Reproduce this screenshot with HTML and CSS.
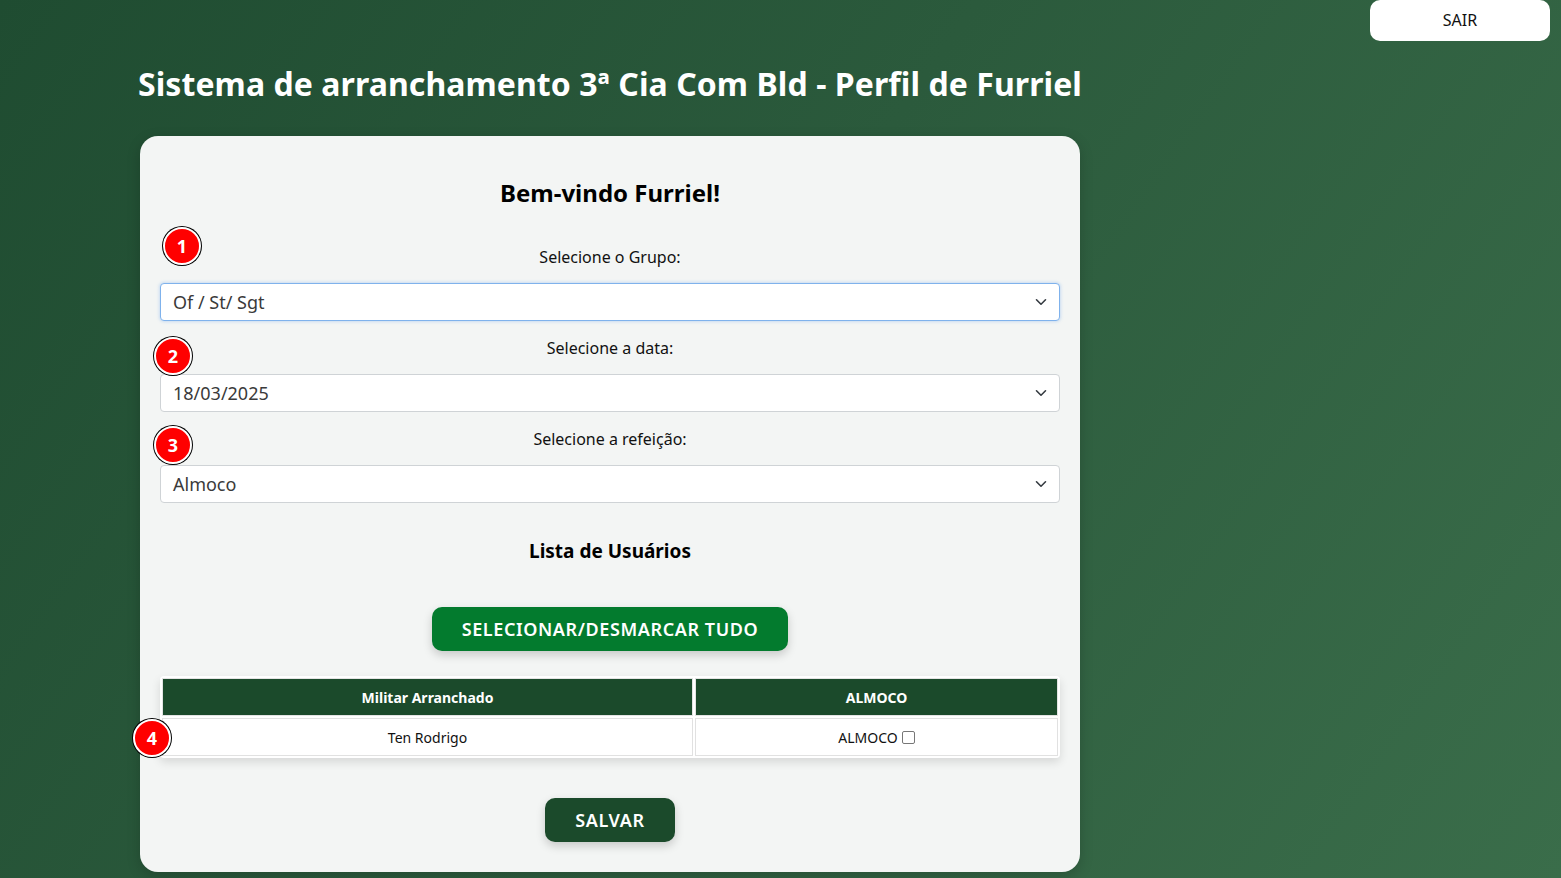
FILE: index.html
```html
<!DOCTYPE html>
<html lang="pt-BR">
<head>
<meta charset="utf-8">
<title>Sistema de arranchamento</title>
<link rel="stylesheet" href="styles.css">
</head>
<body>
<header class="topbar">
  <button class="btn-sair">SAIR</button>
</header>
<main class="page">
  <h1 class="page-title">Sistema de arranchamento 3ª Cia Com Bld - Perfil de Furriel</h1>
  <section class="card">
    <span class="badge badge-1">1</span>
    <span class="badge badge-2">2</span>
    <span class="badge badge-3">3</span>
    <span class="badge badge-4">4</span>

    <h2 class="welcome">Bem-vindo Furriel!</h2>

    <div class="field">
      <label class="field-label">Selecione o Grupo:</label>
      <div class="select select-focus">
        <span class="select-value">Of / St/ Sgt</span>
        <svg class="chevron" width="12" height="8" viewBox="0 0 12 8"><path d="M1.5 1.8 L6 6.2 L10.5 1.8" fill="none" stroke="#343a40" stroke-width="1.6" stroke-linecap="round" stroke-linejoin="round"/></svg>
      </div>
    </div>

    <div class="field">
      <label class="field-label">Selecione a data:</label>
      <div class="select">
        <span class="select-value">18/03/2025</span>
        <svg class="chevron" width="12" height="8" viewBox="0 0 12 8"><path d="M1.5 1.8 L6 6.2 L10.5 1.8" fill="none" stroke="#343a40" stroke-width="1.6" stroke-linecap="round" stroke-linejoin="round"/></svg>
      </div>
    </div>

    <div class="field">
      <label class="field-label">Selecione a refeição:</label>
      <div class="select">
        <span class="select-value">Almoco</span>
        <svg class="chevron" width="12" height="8" viewBox="0 0 12 8"><path d="M1.5 1.8 L6 6.2 L10.5 1.8" fill="none" stroke="#343a40" stroke-width="1.6" stroke-linecap="round" stroke-linejoin="round"/></svg>
      </div>
    </div>

    <h3 class="list-title">Lista de Usuários</h3>

    <div class="center-row">
      <button class="btn btn-green">SELECIONAR/DESMARCAR TUDO</button>
    </div>

    <table class="users">
      <thead>
        <tr><th class="col-name">Militar Arranchado</th><th>ALMOCO</th></tr>
      </thead>
      <tbody>
        <tr>
          <td>Ten Rodrigo</td>
          <td><label class="check-label">ALMOCO <span class="checkbox"></span></label></td>
        </tr>
      </tbody>
    </table>

    <div class="center-row">
      <button class="btn btn-dark">SALVAR</button>
    </div>
  </section>
</main>
</body>
</html>
```

FILE: styles.css
```css
* { box-sizing: border-box; }

html, body { height: 100%; }

body {
  margin: 0;
  min-height: 878px;
  overflow: hidden;
  font-family: "Noto Sans", "Open Sans", "Liberation Sans", sans-serif;
  background: linear-gradient(125deg, #1f4c31 0%, #2b5a3c 45%, #3a6d4a 100%);
  color: #111;
}

.topbar {
  display: flex;
  justify-content: flex-end;
  padding-right: 11px;
}

.btn-sair {
  width: 180px;
  height: 41px;
  border: none;
  border-radius: 10px;
  background: #fff;
  font-family: inherit;
  font-size: 16px;
  color: #111;
  margin: 0;
  padding: 0 0 2px;
}

.page {
  width: 950px;
  margin-left: 138px;
}

.page-title {
  margin: 21px 0 0;
  font-size: 32px;
  line-height: 44px;
  font-weight: 700;
  letter-spacing: 0.07px;
  color: #fff;
  white-space: nowrap;
}

.card {
  position: relative;
  width: 940px;
  margin: 30px 0 0 2px;
  padding: 41px 20px 30px;
  background: #f3f5f4;
  border-radius: 18px;
  box-shadow: 0 4px 14px rgba(0,0,0,0.18);
}

.welcome {
  margin: 0 0 36px;
  text-align: center;
  font-size: 24px;
  line-height: 32px;
  font-weight: 700;
  color: #000;
}

.field { margin-bottom: 15px; }

.field-label {
  display: block;
  text-align: center;
  font-size: 16px;
  line-height: 24px;
  margin-bottom: 14px;
  color: #111;
}

.select {
  display: flex;
  align-items: center;
  justify-content: space-between;
  height: 38px;
  padding: 0 12px 0 12px;
  background: #fff;
  border: 1px solid #cfd3d6;
  border-radius: 4px;
}

.select-focus {
  border-color: #7fb2ec;
  box-shadow: 0 0 3px 1px rgba(80,150,240,0.25);
}

.select-value {
  font-size: 18px;
  color: #3a3a3a;
}

.chevron { display: block; }

.list-title {
  margin: 34px 0 42px;
  text-align: center;
  font-size: 19px;
  line-height: 28px;
  font-weight: 700;
  color: #000;
}

.center-row {
  display: flex;
  justify-content: center;
}

.btn {
  height: 44px;
  border: none;
  border-radius: 10px;
  color: #fff;
  font-family: inherit;
  font-weight: 600;
  font-size: 18px;
  letter-spacing: 0.6px;
  box-shadow: 0 4px 10px rgba(0,0,0,0.18);
}

.btn-green {
  width: 356px;
  background: #037b2e;
}

.btn-dark {
  width: 130px;
  background: #1b4a2b;
}

.users {
  width: 100%;
  margin: 25px 0 40px;
  border-collapse: separate;
  border-spacing: 2px;
  background: #fff;
  box-shadow: 0 4px 10px rgba(0,0,0,0.12);
  border-radius: 4px;
  font-size: 14px;
}

.users th {
  height: 38px;
  background: #1b4a2b;
  color: #fff;
  font-weight: 700;
  border: 1px solid #e3e3e3;
  padding: 0;
}

.users .col-name { width: 531px; }

.users td {
  height: 38px;
  text-align: center;
  border: 1px solid #e1e1e1;
  color: #111;
  padding: 0;
}

.check-label {
  display: inline-flex;
  align-items: center;
  gap: 4px;
}

.checkbox {
  display: inline-block;
  width: 13px;
  height: 13px;
  border: 1.5px solid #777;
  border-radius: 2px;
  background: #fff;
}

.badge {
  position: absolute;
  width: 38px;
  height: 38px;
  border-radius: 50%;
  background: #ff0000;
  border: 2px solid #fff;
  box-shadow: 0 0 0 1px #000;
  color: #fff;
  font-weight: 700;
  font-size: 18px;
  display: flex;
  align-items: center;
  justify-content: center;
  z-index: 2;
}

.badge-1 { left: 23px; top: 91px; }
.badge-2 { left: 14px; top: 201px; }
.badge-3 { left: 14px; top: 290px; }
.badge-4 { left: -7px; top: 583px; }
```
